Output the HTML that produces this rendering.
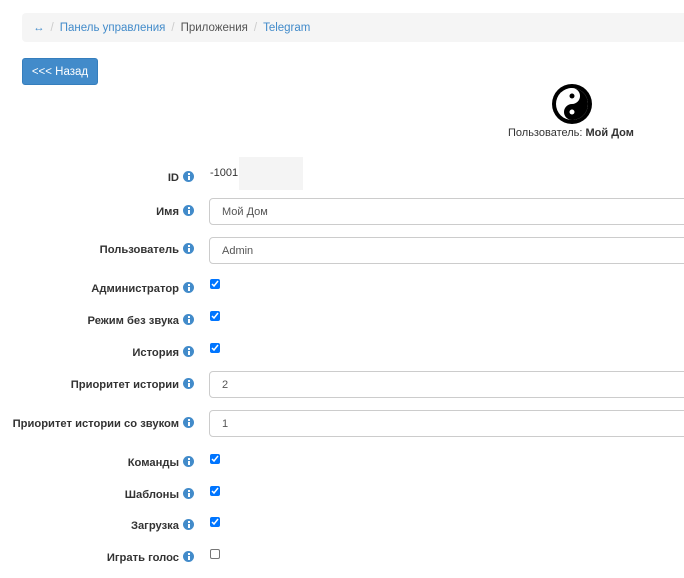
<!DOCTYPE html>
<html><head><meta charset="utf-8"><style>
*{margin:0;padding:0;box-sizing:border-box}
body{width:684px;height:578px;background:#fff;font-family:"Liberation Sans",Arial,sans-serif;color:#333;position:relative;overflow:hidden}
.a{position:absolute}
.bc{left:22px;top:13px;width:670px;height:29px;background:#f5f5f5;border-radius:4px;font-size:11.5px;line-height:31px;padding-left:11px;color:#555}
.bc .l{color:#428bca}.bc .s{color:#ccc;padding:0 6px}
.btn{left:22px;top:58px;width:76px;height:27px;background:#428bca;border:1px solid #357ebd;border-radius:3px;color:#fff;font-size:11.5px;line-height:27px;text-align:center}
.lab{right:505px;font-weight:bold;font-size:11.2px;color:#333;white-space:nowrap;text-align:right;height:14px;line-height:14px}
.ic{position:absolute;width:11px;height:11px;border-radius:50%;background:#428bca;left:183px}
.ic:before{content:"";position:absolute;left:5px;top:2px;width:1.5px;height:1.5px;background:#fff}
.ic:after{content:"";position:absolute;left:4.5px;top:4.5px;width:2px;height:4px;background:#fff}
.inp{left:209px;width:490px;height:27px;border:1px solid #ccc;border-radius:4px;font-size:11px;line-height:27px;padding-left:12px;color:#555}
.cb{left:210px;width:10px;height:10px;border-radius:2px;background:#0075ff}
.cb svg{position:absolute;left:1px;top:1px}
.cbe{left:210px;width:10px;height:10px;border-radius:2px;border:1px solid #767676;background:#fff}
</style></head><body>
<div class="a bc"><span class="l">↔</span><span class="s">/</span><span class="l">Панель управления</span><span class="s">/</span><span>Приложения</span><span class="s">/</span><span class="l">Telegram</span></div>
<div class="a btn">&lt;&lt;&lt; Назад</div>
<svg class="a" style="left:552px;top:84px" width="40" height="40" viewBox="0 0 40 40">
<circle cx="20" cy="20" r="20" fill="#000"/>
<circle cx="20" cy="20" r="16" fill="#fff"/>
<path d="M20 4 A16 16 0 0 1 20 36 Z" fill="#000"/>
<circle cx="20" cy="28" r="8" fill="#000"/>
<circle cx="20" cy="12" r="8" fill="#fff"/>
<circle cx="20" cy="12" r="2.5" fill="#000"/>
<circle cx="20" cy="28" r="2.5" fill="#fff"/>
</svg>
<div class="a" style="left:508px;top:127px;font-size:11px;line-height:13px;color:#333">Пользователь: <b>Мой Дом</b></div>

<div class="a lab" style="top:171px">ID</div><div class="ic" style="top:171px"></div>
<div class="a" style="left:210px;top:167px;font-size:11px;color:#333">-1001</div>
<div class="a" style="left:239px;top:157px;width:64px;height:33px;background:#f4f4f4"></div>

<div class="a lab" style="top:205px">Имя</div><div class="ic" style="top:205px"></div>
<div class="a inp" style="top:198px">Мой Дом</div>
<div class="a lab" style="top:243px">Пользователь</div><div class="ic" style="top:243px"></div>
<div class="a inp" style="top:237px">Admin</div>
<div class="a lab" style="top:282px">Администратор</div><div class="ic" style="top:282px"></div>
<div class="a cb" style="top:279px"><svg width="8" height="8" viewBox="0 0 8 8"><path d="M1 4l2 2 4-5" stroke="#fff" stroke-width="1.5" fill="none"/></svg></div>
<div class="a lab" style="top:314px">Режим без звука</div><div class="ic" style="top:314px"></div>
<div class="a cb" style="top:311px"><svg width="8" height="8" viewBox="0 0 8 8"><path d="M1 4l2 2 4-5" stroke="#fff" stroke-width="1.5" fill="none"/></svg></div>
<div class="a lab" style="top:346px">История</div><div class="ic" style="top:346px"></div>
<div class="a cb" style="top:343px"><svg width="8" height="8" viewBox="0 0 8 8"><path d="M1 4l2 2 4-5" stroke="#fff" stroke-width="1.5" fill="none"/></svg></div>
<div class="a lab" style="top:378px">Приоритет истории</div><div class="ic" style="top:378px"></div>
<div class="a inp" style="top:371px">2</div>
<div class="a lab" style="top:417px">Приоритет истории со звуком</div><div class="ic" style="top:417px"></div>
<div class="a inp" style="top:410px">1</div>
<div class="a lab" style="top:456px">Команды</div><div class="ic" style="top:456px"></div>
<div class="a cb" style="top:454px"><svg width="8" height="8" viewBox="0 0 8 8"><path d="M1 4l2 2 4-5" stroke="#fff" stroke-width="1.5" fill="none"/></svg></div>
<div class="a lab" style="top:488px">Шаблоны</div><div class="ic" style="top:488px"></div>
<div class="a cb" style="top:486px"><svg width="8" height="8" viewBox="0 0 8 8"><path d="M1 4l2 2 4-5" stroke="#fff" stroke-width="1.5" fill="none"/></svg></div>
<div class="a lab" style="top:519px">Загрузка</div><div class="ic" style="top:519px"></div>
<div class="a cb" style="top:517px"><svg width="8" height="8" viewBox="0 0 8 8"><path d="M1 4l2 2 4-5" stroke="#fff" stroke-width="1.5" fill="none"/></svg></div>
<div class="a lab" style="top:551px">Играть голос</div><div class="ic" style="top:551px"></div>
<div class="a cbe" style="top:549px"></div>
</body></html>
